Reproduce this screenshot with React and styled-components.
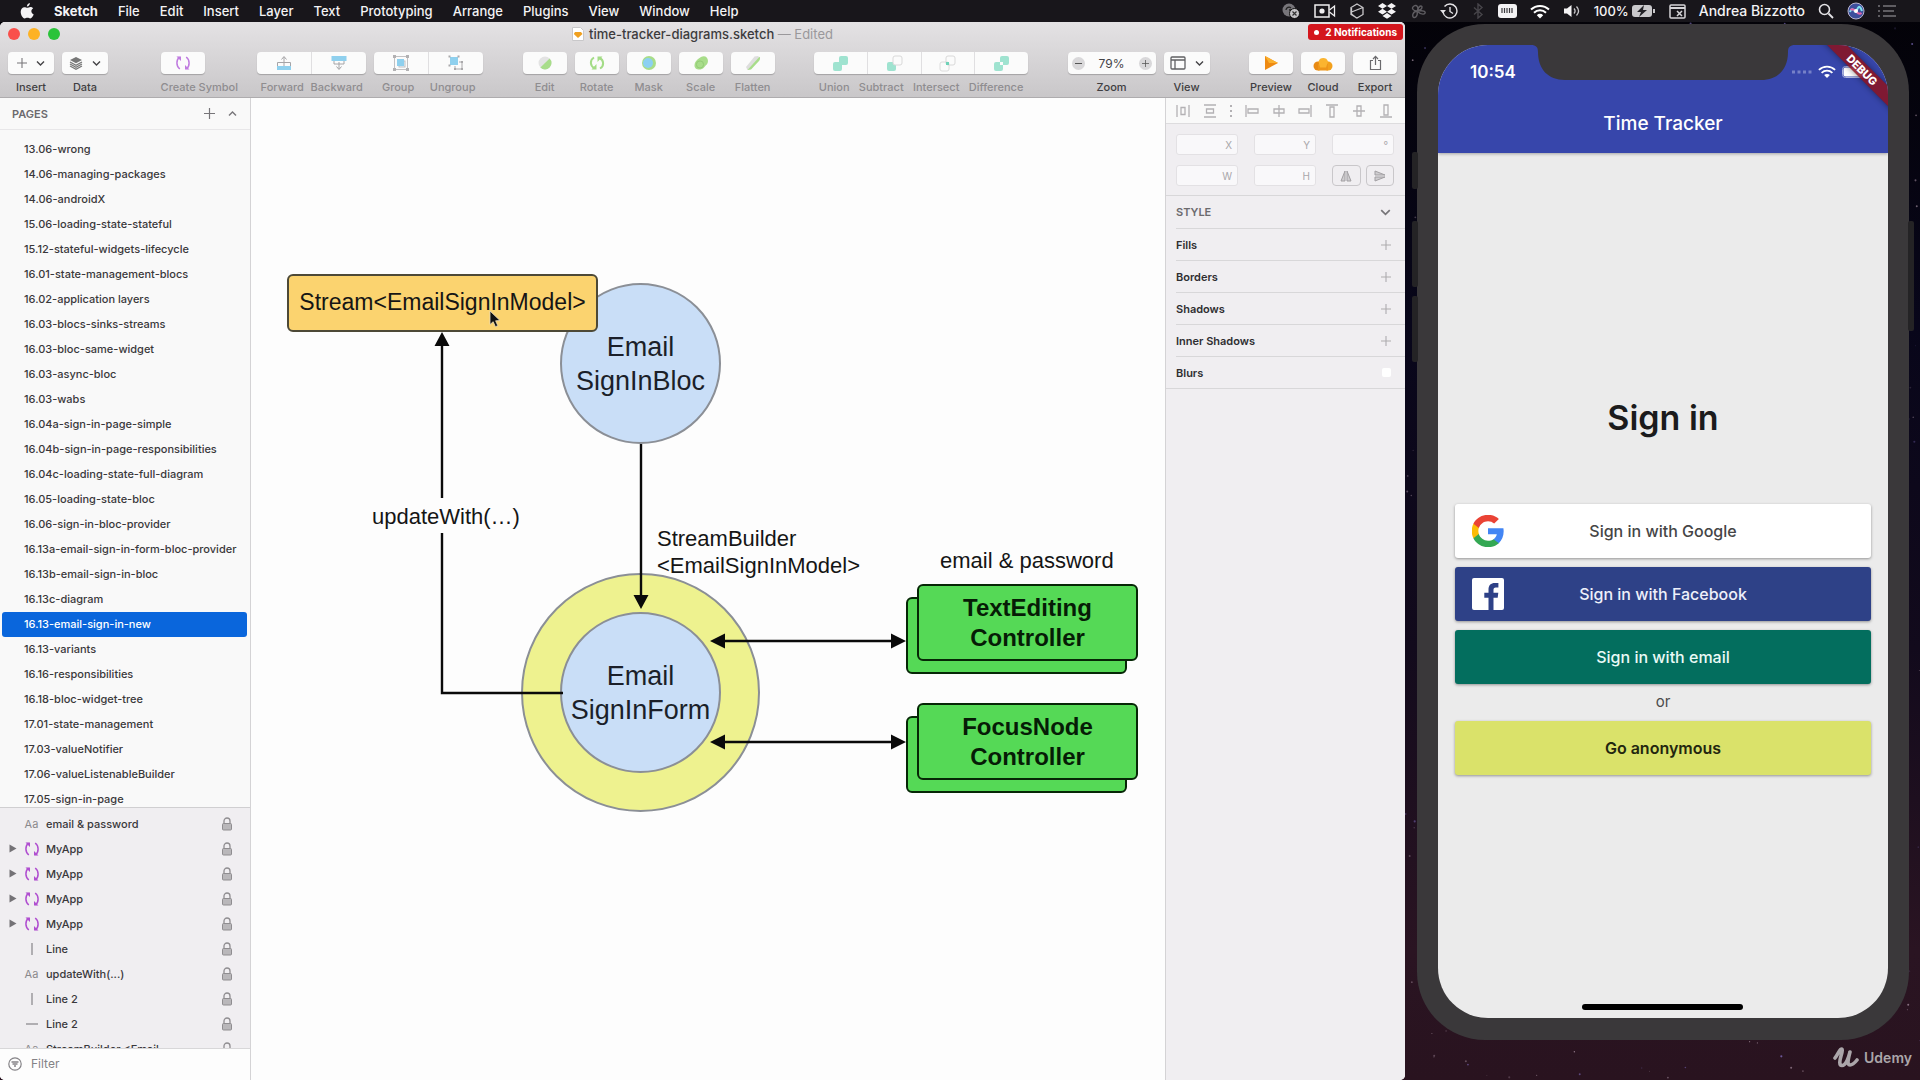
import React from "react";
import styled, { createGlobalStyle } from "styled-components";

const GlobalStyle = createGlobalStyle`
  * { box-sizing: border-box; }
  body { margin: 0; background: #050308; }
  button, input { font: inherit; color: inherit; }
  ul { list-style: none; margin: 0; padding: 0; }
  svg { display: block; flex: none; }
`;

const ui = `Inter, "Liberation Sans", sans-serif`;
const helvetica = `"Liberation Sans", Arial, sans-serif`;

/* ---------- Desktop ---------- */

const Desktop = styled.div`
  position: relative;
  display: flex;
  flex-direction: column;
  height: 100vh;
  overflow: hidden;
  font-family: ${ui};
  background: linear-gradient(180deg, #030207 0%, #08061a 30%, #120a1c 60%, #2a1422 88%, #29131f 100%);
`;

const Sky = styled.svg`
  position: absolute;
  inset: 0;
  width: 100%;
  height: 100%;
`;

const Workspace = styled.div`
  position: relative;
  flex: 1;
  min-height: 0;
  display: grid;
  grid-template-columns: minmax(0, 1fr) 515px;
`;

/* ---------- Menu bar ---------- */

const MenuBar = styled.header`
  position: relative;
  display: flex;
  align-items: center;
  justify-content: space-between;
  height: 22px;
  padding: 0 24px 0 20px;
  background: #18161b;
  color: #f4f3f5;
`;

const MenuItems = styled.nav`
  display: flex;
  align-items: center;
  gap: 20px;
`;

const MenuButton = styled.button`
  padding: 0;
  border: 0;
  background: none;
  font-size: 13px;
  line-height: 20px;
  font-weight: ${(p) => (p.$strong ? 700 : 500)};
`;

const StatusItems = styled.div`
  display: flex;
  align-items: center;
  gap: 13px;
`;

const StatusText = styled.span`
  font-size: ${(p) => (p.$small ? 13 : 14)}px;
  line-height: 20px;
  font-weight: 500;
`;

const BatteryGroup = styled.div`
  display: flex;
  align-items: center;
  gap: 3px;
`;

/* ---------- Sketch window ---------- */

const Window = styled.main`
  position: relative;
  display: flex;
  flex-direction: column;
  min-width: 0;
  min-height: 0;
  overflow: hidden;
  border-radius: 5px;
  background: #fdfdfd;
  color: #2c2b2e;
`;

const Chrome = styled.div`
  height: 76px;
  flex: none;
  border-bottom: 1px solid #aeacae;
  background: linear-gradient(180deg, #e4e2e4 0%, #c9c7c9 100%);
`;

const TitleBar = styled.div`
  position: relative;
  display: flex;
  align-items: center;
  justify-content: center;
  gap: 5px;
  height: 24px;
  font-size: 13px;
  font-weight: 500;
  color: #3c3b3d;
`;

const Lights = styled.div`
  position: absolute;
  left: 8px;
  top: 6px;
  display: flex;
  gap: 8px;
`;

const Light = styled.button`
  width: 12px;
  height: 12px;
  padding: 0;
  border: 0;
  border-radius: 50%;
  background: ${(p) => p.$color};
`;

const Muted = styled.span`
  color: #9a989b;
  font-weight: 400;
`;

const Notice = styled.div`
  position: absolute;
  right: 2px;
  top: 2px;
  display: flex;
  align-items: center;
  gap: 6px;
  height: 16px;
  padding: 0 6px;
  border-radius: 3px;
  background: #d4161d;
  color: #fff;
  font-size: 10px;
  font-weight: 700;
  &::before {
    content: "";
    width: 5px;
    height: 5px;
    border-radius: 50%;
    background: #fff;
  }
`;

const Toolbar = styled.div`
  display: flex;
  padding: 6px 8px 0;
`;

const Cluster = styled.div`
  display: flex;
  gap: 8px;
`;

const Spacer = styled.div`
  flex: ${(p) => p.$grow} 1 0;
`;

const Tool = styled.div`
  display: flex;
  flex-direction: column;
  width: ${(p) => p.$width}px;
`;

const Segments = styled.div`
  display: flex;
  height: 22px;
  border-radius: 4px;
  background: #fbfbfb;
  box-shadow: 0 1px 1px rgba(0, 0, 0, 0.22);
`;

const Segment = styled.button`
  flex: 1;
  display: flex;
  align-items: center;
  justify-content: center;
  gap: ${(p) => p.$gap || 0}px;
  padding: 0;
  border: 0;
  background: none;
  font-size: 12px;
  color: #444346;
  & + & {
    border-left: 1px solid #e0dfe1;
  }
`;

const Captions = styled.div`
  display: flex;
  justify-content: space-around;
  margin: 5px -20px 0;
  padding: 0 20px;
  font-size: 11px;
  line-height: 16px;
  font-weight: 500;
  white-space: nowrap;
  color: ${(p) => (p.$dim ? "#8f8d90" : "#3f3e41")};
`;

const ZoomBox = styled.div`
  flex: 1;
  display: flex;
  align-items: center;
  justify-content: space-between;
  padding: 0 4px;
  font-size: 12px;
  color: #444346;
`;

const RoundButton = styled.button`
  display: grid;
  place-items: center;
  width: 13px;
  height: 13px;
  padding: 0;
  border: 0;
  border-radius: 50%;
  background: #d9d8da;
`;

const Panes = styled.div`
  flex: 1;
  min-height: 0;
  display: grid;
  grid-template-columns: 251px minmax(0, 1fr) 240px;
`;

/* ---------- Sidebar ---------- */

const Sidebar = styled.aside`
  display: flex;
  flex-direction: column;
  min-height: 0;
  border-right: 1px solid #d4d3d5;
  background: #f9f9f9;
`;

const PagesHeader = styled.div`
  display: flex;
  align-items: center;
  gap: 13px;
  flex: none;
  height: 32px;
  padding: 0 13px 0 12px;
  border-bottom: 1px solid #e8e7e9;
`;

const SectionTitle = styled.h2`
  flex: 1;
  margin: 0;
  font-size: 11px;
  font-weight: 600;
  color: #6c6a6e;
`;

const IconButton = styled.button`
  display: grid;
  place-items: center;
  padding: 0;
  border: 0;
  background: none;
`;

const PageList = styled.ul`
  flex: 1;
  min-height: 0;
  overflow: hidden;
  padding: 7px 3px 0 2px;
`;

const PageRow = styled.li`
  height: 25px;
  padding: 0 22px;
  border-radius: 3px;
  font-size: 11px;
  line-height: 25px;
  font-weight: 500;
  white-space: nowrap;
  background: ${(p) => (p.$selected ? "#0a66dc" : "transparent")};
  color: ${(p) => (p.$selected ? "#fff" : "#39383b")};
`;

const LayerList = styled.ul`
  flex: none;
  height: 241px;
  overflow: hidden;
  padding-top: 3px;
  border-top: 1px solid #d0cfd1;
  background: #f0eef1;
`;

const LayerRow = styled.li`
  display: grid;
  grid-template-columns: 8px 15px 1fr 12px;
  align-items: center;
  column-gap: 7px;
  height: 25px;
  padding: 0 17px 0 9px;
  font-size: 11px;
  font-weight: 500;
  color: #39383b;
`;

const LayerIcon = styled.span`
  display: grid;
  place-items: center;
  font-size: 11px;
  font-weight: 400;
  color: #8b898c;
`;

const FilterBar = styled.label`
  display: flex;
  align-items: center;
  gap: 9px;
  flex: none;
  height: 32px;
  padding: 0 8px 2px;
  border-top: 1px solid #d8d7d9;
  background: #fdfdfd;
`;

const FilterInput = styled.input`
  flex: 1;
  min-width: 0;
  padding: 0;
  border: 0;
  background: none;
  font-size: 12px;
  &::placeholder {
    color: #848286;
    opacity: 1;
  }
`;

/* ---------- Canvas ---------- */

const Canvas = styled.section`
  position: relative;
  overflow: hidden;
  background: #fdfdfd;
  font-family: ${helvetica};
  color: #151515;
`;

const Node = styled.div`
  position: absolute;
  left: ${(p) => p.$x}px;
  top: ${(p) => p.$y}px;
  width: ${(p) => p.$w}px;
  height: ${(p) => p.$h}px;
  display: flex;
  align-items: center;
  justify-content: center;
  text-align: center;
  white-space: nowrap;
`;

const Circle = styled(Node)`
  border: 2px solid #8b8f96;
  border-radius: 50%;
  background: ${(p) => p.$fill};
  font-size: 27px;
  line-height: 34px;
  color: #1b1f29;
`;

const StreamNode = styled(Node)`
  border: 2px solid #4d4937;
  border-radius: 6px;
  background: #fbd36f;
  font-size: 23px;
  padding-bottom: 2px;
`;

const ControllerNode = styled(Node)`
  border: 2px solid #062706;
  border-radius: 6px;
  background: #55d956;
  font-size: 24px;
  line-height: 30px;
  font-weight: 700;
  color: #061c06;
`;

const Caption = styled.div`
  position: absolute;
  left: ${(p) => p.$x}px;
  top: ${(p) => p.$y}px;
  font-size: 22px;
  line-height: 27px;
  white-space: nowrap;
`;

const Overlay = styled.svg`
  position: absolute;
  left: 0;
  top: 0;
`;

/* ---------- Inspector ---------- */

const Inspector = styled.aside`
  border-left: 1px solid #d4d3d5;
  background: #f0eef1;
`;

const AlignBar = styled.div`
  display: flex;
  align-items: center;
  justify-content: space-between;
  height: 26px;
  padding: 0 12px 0 10px;
  border-bottom: 1px solid #dddcde;
  background: #f9f9f9;
`;

const Geometry = styled.div`
  display: grid;
  grid-template-columns: repeat(3, 62px);
  justify-content: space-between;
  row-gap: 10px;
  padding: 10px 11px 9px 10px;
  border-bottom: 1px solid #d8d7d9;
`;

const Field = styled.label`
  display: flex;
  align-items: center;
  height: 21px;
  padding: 0 5px;
  border: 1px solid #e3e1e4;
  border-radius: 3px;
  background: #f9f8fa;
  font-size: 10px;
  color: #a9a7aa;
`;

const FieldInput = styled.input`
  flex: 1;
  width: 0;
  padding: 0;
  border: 0;
  background: none;
`;

const FlipPair = styled.div`
  display: grid;
  grid-template-columns: 1fr 1fr;
  gap: 5px;
`;

const FlipButton = styled.button`
  display: grid;
  place-items: center;
  height: 21px;
  padding: 0;
  border: 1px solid #c9c7ca;
  border-radius: 4px;
  background: #f0eef1;
`;

const StyleSections = styled.div`
  padding-left: 10px;
  border-bottom: 1px solid #d8d7d9;
`;

const StyleRow = styled.div`
  display: flex;
  align-items: center;
  justify-content: space-between;
  height: 32px;
  padding-right: 14px;
  font-size: 11px;
  font-weight: 600;
  color: #2f2e31;
  & + & {
    border-top: 1px solid #d8d7d9;
  }
`;

const Tick = styled.input`
  appearance: none;
  width: 9px;
  height: 9px;
  margin: 0;
  border-radius: 2px;
  background: #fff;
`;

/* ---------- Simulator ---------- */

const SimulatorArea = styled.section`
  display: flex;
  min-height: 0;
  padding: 2px 11px 40px 12px;
`;

const Phone = styled.div`
  position: relative;
  flex: 1;
  display: flex;
  padding: 21px 21px 22px;
  border-radius: 68px;
  background: #3a383a;
`;

const SideKey = styled.div`
  position: absolute;
  ${(p) => p.$side}: -5px;
  top: ${(p) => p.$top}px;
  width: 6px;
  height: ${(p) => p.$height}px;
  border-radius: 2px;
  background: #242325;
`;

const Screen = styled.div`
  position: relative;
  flex: 1;
  display: flex;
  flex-direction: column;
  overflow: hidden;
  border-radius: 50px;
  background: #ebebeb;
`;

const AppBar = styled.div`
  position: relative;
  z-index: 1;
  flex: none;
  display: flex;
  flex-direction: column;
  height: 108px;
  background: #3746ab;
  color: #fff;
  box-shadow: 0 1px 3px rgba(0, 0, 0, 0.3);
`;

const PhoneStatus = styled.div`
  display: flex;
  align-items: center;
  justify-content: space-between;
  height: 54px;
  padding: 0 20px 0 32px;
`;

const Clock = styled.time`
  font-size: 17px;
  font-weight: 600;
`;

const Signals = styled.div`
  display: flex;
  align-items: center;
  gap: 6px;
`;

const AppTitle = styled.h1`
  margin: 11px 0 0;
  font-size: 19px;
  line-height: 28px;
  font-weight: 500;
  text-align: center;
`;

const Notch = styled.svg`
  position: absolute;
  z-index: 2;
  top: 0;
  left: 50%;
  margin-left: -132px;
`;

const Ribbon = styled.div`
  position: absolute;
  z-index: 3;
  top: 18px;
  right: -44px;
  width: 140px;
  height: 14px;
  transform: rotate(45deg);
  background: rgba(140, 18, 32, 0.86);
  box-shadow: 0 0 6px rgba(0, 0, 0, 0.45);
  color: #fff;
  font-size: 11px;
  line-height: 14px;
  font-weight: 800;
  text-align: center;
`;

const SignInForm = styled.div`
  flex: 1;
  display: flex;
  flex-direction: column;
  justify-content: center;
  padding: 0 17px;
`;

const SignInTitle = styled.h2`
  margin: 0 0 64px;
  font-size: 34px;
  line-height: 44px;
  font-weight: 600;
  text-align: center;
  color: #1b1b1c;
`;

const SignInButton = styled.button`
  position: relative;
  height: 54px;
  margin-bottom: ${(p) => (p.$last ? 0 : 9)}px;
  padding: 0;
  border: 0;
  border-radius: 3px;
  background: ${(p) => p.$fill};
  color: ${(p) => p.$ink};
  font-size: 16px;
  font-weight: ${(p) => (p.$last ? 600 : 500)};
  box-shadow: 0 1px 3px rgba(0, 0, 0, 0.38);
`;

const Brand = styled.span`
  position: absolute;
  left: 17px;
  top: 11px;
`;

const Or = styled.p`
  margin: 0;
  height: 28px;
  font-size: 15px;
  line-height: 18px;
  text-align: center;
  color: #4b4b4c;
`;

const HomeBar = styled.div`
  position: absolute;
  left: 50%;
  bottom: 8px;
  width: 161px;
  height: 6px;
  margin-left: -81px;
  border-radius: 3px;
  background: #000;
`;

const Watermark = styled.div`
  position: absolute;
  right: 8px;
  bottom: 11px;
  display: flex;
  align-items: center;
  gap: 5px;
  font-size: 14px;
  line-height: 22px;
  font-weight: 600;
  color: #aba6aa;
`;

/* ---------- Icons ---------- */

const Svg = ({ w = 16, h = w, box = `0 0 ${w} ${h}`, children, ...rest }) => (
  <svg width={w} height={h} viewBox={box} fill="none" aria-hidden="true" {...rest}>
    {children}
  </svg>
);

const Apple = () => (
  <Svg w={14} h={16} box="0 0 24 28">
    <path fill="#f4f3f5" d="M17 0c.2 2.600-1.700 5.900-5.200 6.300C11.500 3.500 14 .5 17 0zM12.500 8.500C14 8.500 15.600 7 18.200 7c1.900 0 3.600 1 4.600 2.400-4.600 2.800-3.900 8.800.9 10.700C22.600 23 20.300 27 17.700 27c-1.700 0-2.600-1-4.900-1-2.200 0-3.200 1-4.900 1C4.400 27 1 20.800 1 15.400 1 10.200 4.200 7.300 7.500 7.300c2.100 0 3.500 1.200 5 1.200z" />
  </Svg>
);

const Chevron = ({ up, size = 9, color = "#444346" }) => (
  <Svg w={size} h={size - 2} box="0 0 9 7">
    <path d={up ? "M1 5.500 4.500 2 8 5.500" : "M1 1.500 4.500 5 8 1.500"} stroke={color} strokeWidth="1.400" />
  </Svg>
);

const Plus = ({ size = 11, color = "#777579" }) => (
  <Svg w={size} box="0 0 12 12">
    <path d="M6 0v12M0 6h12" stroke={color} strokeWidth="1.300" />
  </Svg>
);

const Stack = () => (
  <Svg w={14}>
    <path d="M7 1 13 4 7 7.200 1 4z" fill="#777" />
    <path d="M1 6l6 3.200L13 6M1 8l6 3.200L13 8M1 10l6 3.200L13 10" stroke="#777" strokeWidth="1.300" />
  </Svg>
);

const Cycle = ({ color = "#c07be0" }) => (
  <Svg w={16}>
    <path d="M4.500 2.200C1 5 1 11 4.800 14M11.500 13.800C15 11 15 5 11.200 2" stroke={color} strokeWidth="1.500" />
    <path d="M1.500 1.500H6V6zM14.500 14.500H10V10z" fill={color} />
  </Svg>
);

const Forward = () => (
  <Svg w={18} h={18}>
    <rect x="2" y="12" width="14" height="4" fill="#8fd0ee" />
    <path d="M9 12V3M6.500 5.500 9 2.500l2.500 3M2.500 12V8.500h13V12" stroke="#a5a4a7" />
  </Svg>
);

const Backward = () => (
  <Svg w={18} h={18}>
    <rect x="1.500" y="2" width="15" height="5" fill="#8fd0ee" />
    <path d="M4 7v3h10V7M9 8v7M6.500 12.500l2.500 3 2.500-3" stroke="#a5a4a7" />
  </Svg>
);

const GroupIcon = ({ apart }) =>
  apart ? (
    <Svg w={18}>
      <rect x="3" y="3" width="8" height="8" fill="#8fd0ee" />
      <path d="M12 8h3v7H8v-3" stroke="#aaa9ab" />
      <path d="M1.500 1.500h2v2h-2zM10.500 1.500h2v2h-2zM1.500 10.500h2v2h-2zM14 7h2v2h-2zM14 14h2v2h-2zM7 14h2v2H7z" fill="#aaa9ab" />
    </Svg>
  ) : (
    <Svg w={18}>
      <rect x="2.500" y="2.500" width="13" height="13" stroke="#c2c1c3" />
      <path d="M1 1h3v3H1zM14 1h3v3h-3zM1 14h3v3H1zM14 14h3v3h-3z" fill="#b2b1b3" />
      <rect x="7" y="7" width="6" height="6" fill="#e8f4fb" stroke="#c2c1c3" />
      <rect x="5" y="5" width="7" height="7" fill="#8fd0ee" />
    </Svg>
  );

const EditIcon = () => (
  <Svg w={16}>
    <circle cx="8" cy="8" r="6.500" fill="#e3e3e3" />
    <path d="M12.600 3.400A6.500 6.500 0 1 1 3.400 12.600z" fill="#a8dd8a" />
  </Svg>
);

const RotateIcon = () => (
  <Svg w={18} h={16}>
    <path d="M6 2.500C1.500 5 2 11 6.500 13M12 13.500C16.500 11 16 5 11.500 3" stroke="#a4dc87" strokeWidth="2" />
    <path d="M8.500 9v5.500H3.500zM9.500 7V1.500h5z" fill="#a4dc87" />
  </Svg>
);

const MaskIcon = () => (
  <Svg w={18} h={16}>
    <circle cx="9" cy="8" r="7" fill="#a8dd8a" />
    <circle cx="8" cy="8" r="5" fill="#8cd0f2" />
  </Svg>
);

const ScaleIcon = () => (
  <Svg w={16}>
    <path d="M8 2c3-2 7-.500 7 4 0 3-2 4-4 6.500C8 16 1 15 1.500 10 2 6 5 4 8 2z" fill="#a8dd8a" />
    <circle cx="7" cy="9.500" r="3.600" stroke="#93cb76" />
  </Svg>
);

const FlattenIcon = () => (
  <Svg w={16}>
    <path d="M9.500 1.500 13 1l2 2-9 11-3.500 1L1 12z" fill="#dedede" />
    <path d="M14.500 1.800c1 1.200.5 3-.5 4.200L6 14.500 2.500 15z" fill="#a8dd8a" />
  </Svg>
);

const BooleanIcon = ({ kind }) => {
  const mint = "#9fe3d0";
  const front = { x: 7, y: 1, width: 9, height: 9, rx: 2 };
  const back = { x: 1, y: 7, width: 9, height: 9, rx: 2 };
  return (
    <Svg w={17}>
      <rect {...back} fill={kind === "intersect" ? "none" : mint} stroke={kind === "intersect" ? "#dcdcdc" : "none"} />
      <rect
        {...front}
        fill={kind === "subtract" ? "#fbfbfb" : kind === "intersect" ? "none" : mint}
        stroke={kind === "subtract" || kind === "intersect" ? "#d9d9d9" : "none"}
      />
      {kind === "intersect" && <rect x="7" y="7" width="3" height="3" fill="#6fd2b8" />}
      {kind === "difference" && <rect x="7" y="7" width="3" height="3" fill="#fbfbfb" />}
    </Svg>
  );
};

const ViewIcon = () => (
  <Svg w={16} h={14}>
    <rect x="1" y="1" width="14" height="12" rx="1" stroke="#606063" strokeWidth="1.300" />
    <path d="M1 4h14M5 4v9" stroke="#606063" strokeWidth="1.300" />
  </Svg>
);

const Play = () => (
  <Svg w={14} h={14}>
    <path d="M1 0l13 7-13 7z" fill="#ee8a12" />
    <path d="M1 0l13 7-9 0z" fill="#fbb12e" />
  </Svg>
);

const CloudIcon = () => (
  <Svg w={20} h={15}>
    <circle cx="5" cy="10" r="4.500" fill="#e88a13" />
    <circle cx="15" cy="10" r="4.500" fill="#f2a01c" />
    <rect x="5" y="8" width="10" height="6.500" fill="#ee9519" />
    <path d="M5.500 5.500a5 5 0 0 1 9.500 0l-2 6H7z" fill="#fbb42f" />
  </Svg>
);

const ExportIcon = () => (
  <Svg w={13} h={16}>
    <path d="M4 5.500H1.500v9h10v-9H9M6.500 10V1.500M4 4l2.500-2.700L9 4" stroke="#6b6a6d" strokeWidth="1.200" />
  </Svg>
);

const DocIcon = () => (
  <Svg w={12} h={14}>
    <path d="M.5.5h8l3 3v10H.5z" fill="#fff" stroke="#c9c8ca" />
    <path d="M3 5h6l1.500 2L6 11 1.800 7z" fill="#f0a020" />
  </Svg>
);

const Lock = () => (
  <Svg w={12} h={14}>
    <path d="M3 7V4a3 3 0 0 1 6 0v3" stroke="#8f8d90" strokeWidth="1.300" />
    <rect x="1.500" y="6.500" width="9" height="6.500" rx="1" fill="#b9b7ba" stroke="#8f8d90" />
  </Svg>
);

const Disclosure = () => (
  <Svg w={8} h={9}>
    <path d="M.5.5v8l7-4z" fill="#747276" />
  </Svg>
);

const FilterIcon = () => (
  <Svg w={14}>
    <circle cx="7" cy="7" r="6.200" stroke="#858387" strokeWidth="1.200" />
    <path d="M3.500 5h7M4.500 7h5M6 9h2" stroke="#858387" strokeWidth="1.300" />
  </Svg>
);

const alignShapes = [
  <path d="M1 1v12M13 1v12M5 3.500h4v7H5z" />,
  <path d="M1 1h12M1 13h12M3.500 5h7v4h-7z" />,
  null,
  <path d="M1 1v12M3 5h10v4H3z" />,
  <path d="M7 1v12M2 5h10v4H2z" />,
  <path d="M13 1v12M1 5h10v4H1z" />,
  <path d="M1 1h12M5 3h4v10H5z" />,
  <path d="M1 7h12M5 2h4v10H5z" />,
  <path d="M1 13h12M5 1h4v10H5z" />,
];
const alignNames = [
  "Distribute horizontally", "Distribute vertically", "", "Align left", "Align center",
  "Align right", "Align top", "Align middle", "Align bottom",
];

const WifiIcon = ({ w = 20 }) => (
  <Svg w={w} h={(w * 15) / 20} box="0 0 20 15">
    <path d="M1 5.500a13 13 0 0 1 18 0M4 8.700a8.600 8.600 0 0 1 12 0" stroke="#fff" strokeWidth="2" />
    <path d="M6.800 11.200a4.500 4.500 0 0 1 6.400 0L10 14.500z" fill="#fff" />
  </Svg>
);

const GoogleLogo = () => (
  <Svg w={32} box="0 0 48 48">
    <path fill="#4285F4" d="M47.500 24.500c0-1.600-.2-3.200-.4-4.700H24v9h13.200c-.6 3-2.300 5.600-4.900 7.400v6h7.900c4.600-4.300 7.300-10.500 7.300-17.700z" />
    <path fill="#34A853" d="M24 48.300c6.600 0 12.100-2.200 16.200-5.900l-7.900-6.100c-2.200 1.500-5 2.300-8.300 2.300-6.400 0-11.800-4.300-13.700-10.100H2.100v6.300C6.100 42.800 14.400 48.300 24 48.300z" />
    <path fill="#FBBC05" d="M10.300 28.500c-.5-1.500-.8-3-.8-4.600s.3-3.100.8-4.600V13H2.100C.5 16.300-.4 20-.4 23.900s.9 7.600 2.500 10.900z" />
    <path fill="#EA4335" d="M24 9.200c3.600 0 6.800 1.200 9.300 3.700l7-7C36.100 2 30.600-.3 24-.3 14.400-.3 6.100 5.200 2.100 13.100l8.200 6.300C12.200 13.500 17.600 9.200 24 9.200z" />
  </Svg>
);

const FacebookLogo = () => (
  <Svg w={32}>
    <path fill="#fff" d="M2 0h28a2 2 0 0 1 2 2v28a2 2 0 0 1-2 2h-8.500V19.700h4.200l.6-4.900h-4.800v-3c0-1.400.4-2.400 2.400-2.400h2.500V5.100c-.4-.1-2-.2-3.700-.2-3.700 0-6.200 2.200-6.200 6.400v3.500h-4.200v4.900h4.200V32H2a2 2 0 0 1-2-2V2a2 2 0 0 1 2-2z" />
  </Svg>
);

const UdemyMark = () => (
  <Svg w={26} h={22}>
    <path
      d="M2 11C4 9 6 4 7.500 2.500 10 1 9.500 4 8 9s-2 9.500 1 9.500c4 0 7-9 8-13.500-1.500 6-3.500 13 0 13 3 0 5-2.500 7-5"
      stroke="#aba6aa"
      strokeWidth="3.600"
      strokeLinecap="round"
      strokeLinejoin="round"
    />
  </Svg>
);

const statusIcons = [
  <Svg w={20} h={16}>
    <circle cx="8" cy="7" r="6.500" fill="#77757a" />
    <path d="M5 7a3 3 0 0 1 5-2M8 7h3" stroke="#222" strokeWidth="1.300" />
    <circle cx="13.500" cy="10.500" r="5" fill="#c5c4c7" stroke="#111" />
    <path d="M11.500 8.500l4 4m0-4l-4 4" stroke="#333" strokeWidth="1.200" />
  </Svg>,
  <Svg w={22} h={14}>
    <rect x="1" y="1" width="14" height="12" stroke="#f0eff1" strokeWidth="1.500" />
    <circle cx="8" cy="7" r="2.600" fill="#f0eff1" />
    <path d="M15.500 6 20.500 2v10l-5-4" stroke="#f0eff1" strokeWidth="1.300" />
  </Svg>,
  <Svg w={16} h={16}>
    <path d="M8 1l6 3.500v7L8 15l-6-3.500v-7zM2.500 9 14 4.500M2.500 5v6l5 4" stroke="#c9c8cb" strokeWidth="1.300" />
  </Svg>,
  <Svg w={18} h={16}>
    <path fill="#f4f3f5" d="M4.500 0 9 2.900 4.500 5.800 0 2.900zM13.500 0 18 2.900l-4.500 2.900L9 2.900zM4.500 5.800 9 8.700l-4.500 2.900L0 8.700zM13.500 5.800 18 8.700l-4.500 2.900L9 8.700zM9 10l4.500 2.900L9 15.800l-4.500-2.900z" />
  </Svg>,
  <Svg w={17} h={16}>
    <path d="M8 8C4 8 2 5 5 3s5 2 3 5zM8 8c3 0 7-1 8 1s-3 4-8-1zM8 8c1 4-1 7-3 6.500S3 9 8 8zM9 7c0-4 4-5 4-3s-1 3-4 3z" stroke="#5f5d62" strokeWidth="1.400" />
  </Svg>,
  <Svg w={19} h={16}>
    <path d="M4 9A7 7 0 1 0 5.500 3.500M11 4v4.500l3 2" stroke="#e4e3e6" strokeWidth="1.400" />
    <path d="M1 7h6L4 10.500z" fill="#e4e3e6" />
  </Svg>,
  <Svg w={14} h={16}>
    <path d="M3 4.500l8 7L7 15V1l4 3.500-8 7" stroke="#47454a" strokeWidth="1.400" />
  </Svg>,
  <Svg w={19} h={14}>
    <rect width="19" height="14" rx="3" fill="#f4f3f5" />
    <path d="M4 4v5M6.500 4v5M9 4v5M11.500 4v5M14 4v5" stroke="#3b3a3e" strokeWidth="1.200" />
  </Svg>,
  <WifiIcon />,
  <Svg w={18} h={14}>
    <path d="M1 4.500h3L8.500 1v12L4 9.500H1z" fill="#f4f3f5" />
    <path d="M11 4.500c1.300 1.500 1.300 3.500 0 5M13.500 2.500c2.500 2.700 2.500 6.300 0 9" stroke="#c9c8cb" strokeWidth="1.300" />
  </Svg>,
];

/* ---------- Content ---------- */

const menus = ["File", "Edit", "Insert", "Layer", "Text", "Prototyping", "Arrange", "Plugins", "View", "Window", "Help"];

const pages = [
  "13.06-wrong", "14.06-managing-packages", "14.06-androidX", "15.06-loading-state-stateful",
  "15.12-stateful-widgets-lifecycle", "16.01-state-management-blocs", "16.02-application layers",
  "16.03-blocs-sinks-streams", "16.03-bloc-same-widget", "16.03-async-bloc", "16.03-wabs",
  "16.04a-sign-in-page-simple", "16.04b-sign-in-page-responsibilities", "16.04c-loading-state-full-diagram",
  "16.05-loading-state-bloc", "16.06-sign-in-bloc-provider", "16.13a-email-sign-in-form-bloc-provider",
  "16.13b-email-sign-in-bloc", "16.13c-diagram", "16.13-email-sign-in-new", "16.13-variants",
  "16.16-responsibilities", "16.18-bloc-widget-tree", "17.01-state-management", "17.03-valueNotifier",
  "17.06-valueListenableBuilder", "17.05-sign-in-page",
];

const layers = [
  ["text", "email & password"], ["symbol", "MyApp"], ["symbol", "MyApp"], ["symbol", "MyApp"], ["symbol", "MyApp"],
  ["vline", "Line"], ["text", "updateWith(...)"], ["vline", "Line 2"], ["hline", "Line 2"],
  ["text", "StreamBuilder <Email"],
];

const layerIcons = {
  text: "Aa",
  symbol: <Cycle color="#b04fd0" />,
  vline: <Svg w={2} h={12}><path d="M1 0v12" stroke="#9b999c" strokeWidth="1.500" /></Svg>,
  hline: <Svg w={12} h={2}><path d="M0 1h12" stroke="#9b999c" strokeWidth="1.500" /></Svg>,
};

const makeStars = (count) => {
  let seed = 41;
  const next = () => {
    seed = (seed * 16807) % 2147483647;
    return seed / 2147483647;
  };
  return Array.from({ length: count }, () => ({
    x: 1400 + next() * 520,
    y: 22 + next() * 1058,
    r: 0.4 + next() * 0.7,
    o: 0.15 + next() * 0.5,
    c: next() > 0.6 ? "#8f7cd8" : "#cfb6c8",
  }));
};
const stars = makeStars(520);

const ToolGroup = ({ width, items, dim }) => (
  <Tool $width={width}>
    <Segments>
      {items.map(([name, icon, menu]) => (
        <Segment key={name} aria-label={name} $gap={menu ? 9 : 0}>
          {icon}
          {menu && <Chevron />}
        </Segment>
      ))}
    </Segments>
    <Captions $dim={dim}>
      {items.map(([name]) => <span key={name}>{name}</span>)}
    </Captions>
  </Tool>
);

function MenuBarView() {
  return (
    <MenuBar>
      <MenuItems>
        <MenuButton aria-label="Apple menu"><Apple /></MenuButton>
        <MenuButton $strong>Sketch</MenuButton>
        {menus.map((m) => <MenuButton key={m}>{m}</MenuButton>)}
      </MenuItems>
      <StatusItems>
        {statusIcons.map((icon, i) => <React.Fragment key={i}>{icon}</React.Fragment>)}
        <BatteryGroup>
          <StatusText $small>100%</StatusText>
          <Svg w={24} h={14}>
            <rect x="0" y="1" width="20" height="12" rx="3" fill="#c9c8cb" />
            <path d="M22 5v4" stroke="#c9c8cb" strokeWidth="2" />
            <path d="M12 1 5 8h4l-2 5 8-7h-4z" fill="#222126" />
          </Svg>
        </BatteryGroup>
        <Svg w={17} h={15}>
          <rect x="1" y="1" width="15" height="13" rx="1" stroke="#d5d4d7" strokeWidth="1.500" />
          <path d="M1 4h15" stroke="#d5d4d7" strokeWidth="2" />
          <path d="M8 7l5 5m0-5l-5 5" stroke="#d5d4d7" strokeWidth="1.500" />
        </Svg>
        <StatusText>Andrea Bizzotto</StatusText>
        <Svg w={16} h={16}>
          <circle cx="6.500" cy="6.500" r="5" stroke="#e4e3e6" strokeWidth="1.600" />
          <path d="M10.500 10.500 15 15" stroke="#e4e3e6" strokeWidth="1.800" />
        </Svg>
        <Svg w={18} h={18}>
          <circle cx="9" cy="9" r="8" fill="#3d4f9c" stroke="#b9b4cf" />
          <path d="M3 10c3-8 5 4 7-2s4-2 5 1" stroke="#7fe0ee" strokeWidth="2" />
          <path d="M3.500 8c4-4 7 7 11 3" stroke="#e465a8" strokeWidth="1.800" />
          <circle cx="9" cy="9" r="2" fill="#fff" />
        </Svg>
        <Svg w={18} h={14}>
          <path d="M0 2h2M0 7h2M0 12h2M5 2h13M5 7h11M5 12h13" stroke="#5f5d62" strokeWidth="2" />
        </Svg>
      </StatusItems>
    </MenuBar>
  );
}

function ToolbarView() {
  return (
    <Toolbar>
      <Cluster>
        <ToolGroup width={46} items={[["Insert", <Plus size={10} />, true]]} />
        <ToolGroup width={46} items={[["Data", <Stack />, true]]} />
      </Cluster>
      <Spacer $grow={4} />
      <Cluster>
        <ToolGroup width={44} dim items={[["Create Symbol", <Cycle />]]} />
      </Cluster>
      <Spacer $grow={4} />
      <Cluster>
        <ToolGroup width={109} dim items={[["Forward", <Forward />], ["Backward", <Backward />]]} />
        <ToolGroup width={109} dim items={[["Group", <GroupIcon />], ["Ungroup", <GroupIcon apart />]]} />
      </Cluster>
      <Spacer $grow={3} />
      <Cluster>
        <ToolGroup width={44} dim items={[["Edit", <EditIcon />]]} />
        <ToolGroup width={44} dim items={[["Rotate", <RotateIcon />]]} />
        <ToolGroup width={44} dim items={[["Mask", <MaskIcon />]]} />
        <ToolGroup width={44} dim items={[["Scale", <ScaleIcon />]]} />
        <ToolGroup width={44} dim items={[["Flatten", <FlattenIcon />]]} />
      </Cluster>
      <Spacer $grow={3} />
      <Cluster>
        <ToolGroup
          width={214}
          dim
          items={["Union", "Subtract", "Intersect", "Difference"].map((n) => [n, <BooleanIcon kind={n.toLowerCase()} />])}
        />
      </Cluster>
      <Spacer $grow={3} />
      <Cluster>
        <Tool $width={88}>
          <Segments>
            <ZoomBox>
              <RoundButton aria-label="Zoom out">
                <Svg w={7}><path d="M0 3.500h7" stroke="#555" strokeWidth="1.200" /></Svg>
              </RoundButton>
              79%
              <RoundButton aria-label="Zoom in"><Plus size={7} color="#555" /></RoundButton>
            </ZoomBox>
          </Segments>
          <Captions><span>Zoom</span></Captions>
        </Tool>
        <ToolGroup width={46} items={[["View", <ViewIcon />, true]]} />
      </Cluster>
      <Spacer $grow={3} />
      <Cluster>
        <ToolGroup width={44} items={[["Preview", <Play />]]} />
        <ToolGroup width={44} items={[["Cloud", <CloudIcon />]]} />
        <ToolGroup width={44} items={[["Export", <ExportIcon />]]} />
      </Cluster>
    </Toolbar>
  );
}

function SidebarView() {
  return (
    <Sidebar>
      <PagesHeader>
        <SectionTitle>PAGES</SectionTitle>
        <IconButton aria-label="Add page"><Plus /></IconButton>
        <IconButton aria-label="Collapse pages"><Chevron up color="#777579" /></IconButton>
      </PagesHeader>
      <PageList>
        {pages.map((p) => <PageRow key={p} $selected={p === "16.13-email-sign-in-new"}>{p}</PageRow>)}
      </PageList>
      <LayerList>
        {layers.map(([kind, name], i) => (
          <LayerRow key={i}>
            <span>{kind === "symbol" && <Disclosure />}</span>
            <LayerIcon>{layerIcons[kind]}</LayerIcon>
            <span>{name}</span>
            <Lock />
          </LayerRow>
        ))}
      </LayerList>
      <FilterBar>
        <FilterIcon />
        <FilterInput placeholder="Filter" aria-label="Filter" />
      </FilterBar>
    </Sidebar>
  );
}

function CanvasView() {
  return (
    <Canvas>
      <Circle $x={309} $y={185} $w={161} $h={161} $fill="#c9def7">Email<br />SignInBloc</Circle>
      <Circle $x={270} $y={475} $w={239} $h={239} $fill="#eef28f" />
      <Circle $x={309} $y={514} $w={161} $h={161} $fill="#c9def7">Email<br />SignInForm</Circle>
      <StreamNode $x={36} $y={176} $w={311} $h={58}>Stream&lt;EmailSignInModel&gt;</StreamNode>
      <Caption $x={121} $y={405}>updateWith(…)</Caption>
      <Caption $x={406} $y={427}>StreamBuilder<br />&lt;EmailSignInModel&gt;</Caption>
      <Caption $x={689} $y={449}>email &amp; password</Caption>
      <ControllerNode $x={655} $y={499} $w={221} $h={77} />
      <ControllerNode $x={666} $y={486} $w={221} $h={77}>TextEditing<br />Controller</ControllerNode>
      <ControllerNode $x={655} $y={618} $w={221} $h={77} />
      <ControllerNode $x={666} $y={605} $w={221} $h={77}>FocusNode<br />Controller</ControllerNode>
      <Overlay width="900" height="720" aria-hidden="true">
        <g fill="none" stroke="#0a0a0a" strokeWidth="2.400">
          <path d="M191 248V400M191 435V595H312M390 346V498" />
          <path d="M472 543H643M472 644H643" />
        </g>
        <g fill="#0a0a0a">
          <path d="M191 234l7.500 14h-15zM390 511l7.500-14h-15z" />
          <path d="M459 543l15-7.500v15zM655 543l-15-7.500v15zM459 644l15-7.500v15zM655 644l-15-7.500v15z" />
        </g>
        <path d="M239 213v13.500l3.200-2.800 2.200 5 2.400-1-2.200-4.900 4.400-.3z" fill="#111" stroke="#e8dcc0" strokeWidth=".8" />
      </Overlay>
    </Canvas>
  );
}

function InspectorView() {
  const field = (name) => (
    <Field key={name}><FieldInput />{name}</Field>
  );
  return (
    <Inspector>
      <AlignBar>
        {alignShapes.map((shape, i) =>
          shape ? (
            <IconButton key={i} aria-label={alignNames[i]}>
              <Svg w={14} stroke="#b3b1b4" strokeWidth="1.300">{shape}</Svg>
            </IconButton>
          ) : (
            <Svg key={i} w={2} h={12}><path d="M1 0v12" stroke="#b3b1b4" strokeWidth="2" strokeDasharray="2 3" /></Svg>
          )
        )}
      </AlignBar>
      <Geometry>
        {["X", "Y", "°", "W", "H"].map(field)}
        <FlipPair>
          <FlipButton aria-label="Flip horizontally">
            <Svg w={12}><path d="M5 1v10H1zM7 1v10h4z" stroke="#a19fa2" fill="#cfcdd0" /></Svg>
          </FlipButton>
          <FlipButton aria-label="Flip vertically">
            <Svg w={12}><path d="M1 5V1l10 4zM1 7v4l10-4z" stroke="#a19fa2" fill="#cfcdd0" /></Svg>
          </FlipButton>
        </FlipPair>
      </Geometry>
      <StyleSections>
        <StyleRow>
          <SectionTitle>STYLE</SectionTitle>
          <IconButton aria-label="Collapse style"><Chevron size={11} color="#777579" /></IconButton>
        </StyleRow>
        {["Fills", "Borders", "Shadows", "Inner Shadows"].map((s) => (
          <StyleRow key={s}>
            {s}
            <IconButton aria-label={`Add ${s}`}><Plus size={10} color="#adabae" /></IconButton>
          </StyleRow>
        ))}
        <StyleRow as="label">
          Blurs
          <Tick type="checkbox" />
        </StyleRow>
      </StyleSections>
    </Inspector>
  );
}

function PhoneView() {
  return (
    <Phone>
      <SideKey $side="left" $top={128} $height={37} />
      <SideKey $side="left" $top={197} $height={66} />
      <SideKey $side="left" $top={272} $height={66} />
      <SideKey $side="right" $top={197} $height={110} />
      <Screen>
        <Notch width="264" height="36" viewBox="0 0 264 36" aria-hidden="true">
          <path d="M0 0C5 0 7 2 7 7c0 17 10 28 27 28h196c17 0 27-11 27-28 0-5 2-7 7-7z" fill="#3a383a" />
        </Notch>
        <AppBar>
          <PhoneStatus>
            <Clock>10:54</Clock>
            <Signals>
              <Svg w={20} h={4}>
                <path d="M0 2h3M5.500 2h3M11 2h3M16.500 2h3" stroke="#7681c8" strokeWidth="3" />
              </Svg>
              <WifiIcon w={18} />
              <Svg w={26} h={12}>
                <rect x=".5" y=".5" width="22" height="11" rx="3" stroke="#aab1dd" />
                <rect x="1.500" y="1.500" width="20" height="9" rx="2" fill="#fff" />
              </Svg>
            </Signals>
          </PhoneStatus>
          <AppTitle>Time Tracker</AppTitle>
        </AppBar>
        <Ribbon>DEBUG</Ribbon>
        <SignInForm>
          <SignInTitle>Sign in</SignInTitle>
          <SignInButton $fill="#fff" $ink="#454546"><Brand><GoogleLogo /></Brand>Sign in with Google</SignInButton>
          <SignInButton $fill="#2e4187" $ink="#eef0fa"><Brand><FacebookLogo /></Brand>Sign in with Facebook</SignInButton>
          <SignInButton $fill="#036e5e" $ink="#eafaf6">Sign in with email</SignInButton>
          <Or>or</Or>
          <SignInButton $last $fill="#dae26a" $ink="#23260f">Go anonymous</SignInButton>
        </SignInForm>
        <HomeBar />
      </Screen>
    </Phone>
  );
}

export default function App() {
  return (
    <Desktop>
      <GlobalStyle />
      <Sky viewBox="0 0 1920 1080" preserveAspectRatio="xMaxYMin slice" aria-hidden="true">
        {stars.map((s, i) => <circle key={i} cx={s.x} cy={s.y} r={s.r} fill={s.c} opacity={s.o} />)}
      </Sky>
      <MenuBarView />
      <Workspace>
        <Window>
          <Chrome>
            <TitleBar>
              <Lights>
                <Light $color="#f9504b" aria-label="Close" />
                <Light $color="#fdb225" aria-label="Minimize" />
                <Light $color="#2bc33a" aria-label="Zoom window" />
              </Lights>
              <DocIcon />
              <span>time-tracker-diagrams.sketch <Muted>— Edited</Muted></span>
              <Notice>2 Notifications</Notice>
            </TitleBar>
            <ToolbarView />
          </Chrome>
          <Panes>
            <SidebarView />
            <CanvasView />
            <InspectorView />
          </Panes>
        </Window>
        <SimulatorArea>
          <PhoneView />
        </SimulatorArea>
      </Workspace>
      <Watermark><UdemyMark />Udemy</Watermark>
    </Desktop>
  );
}
